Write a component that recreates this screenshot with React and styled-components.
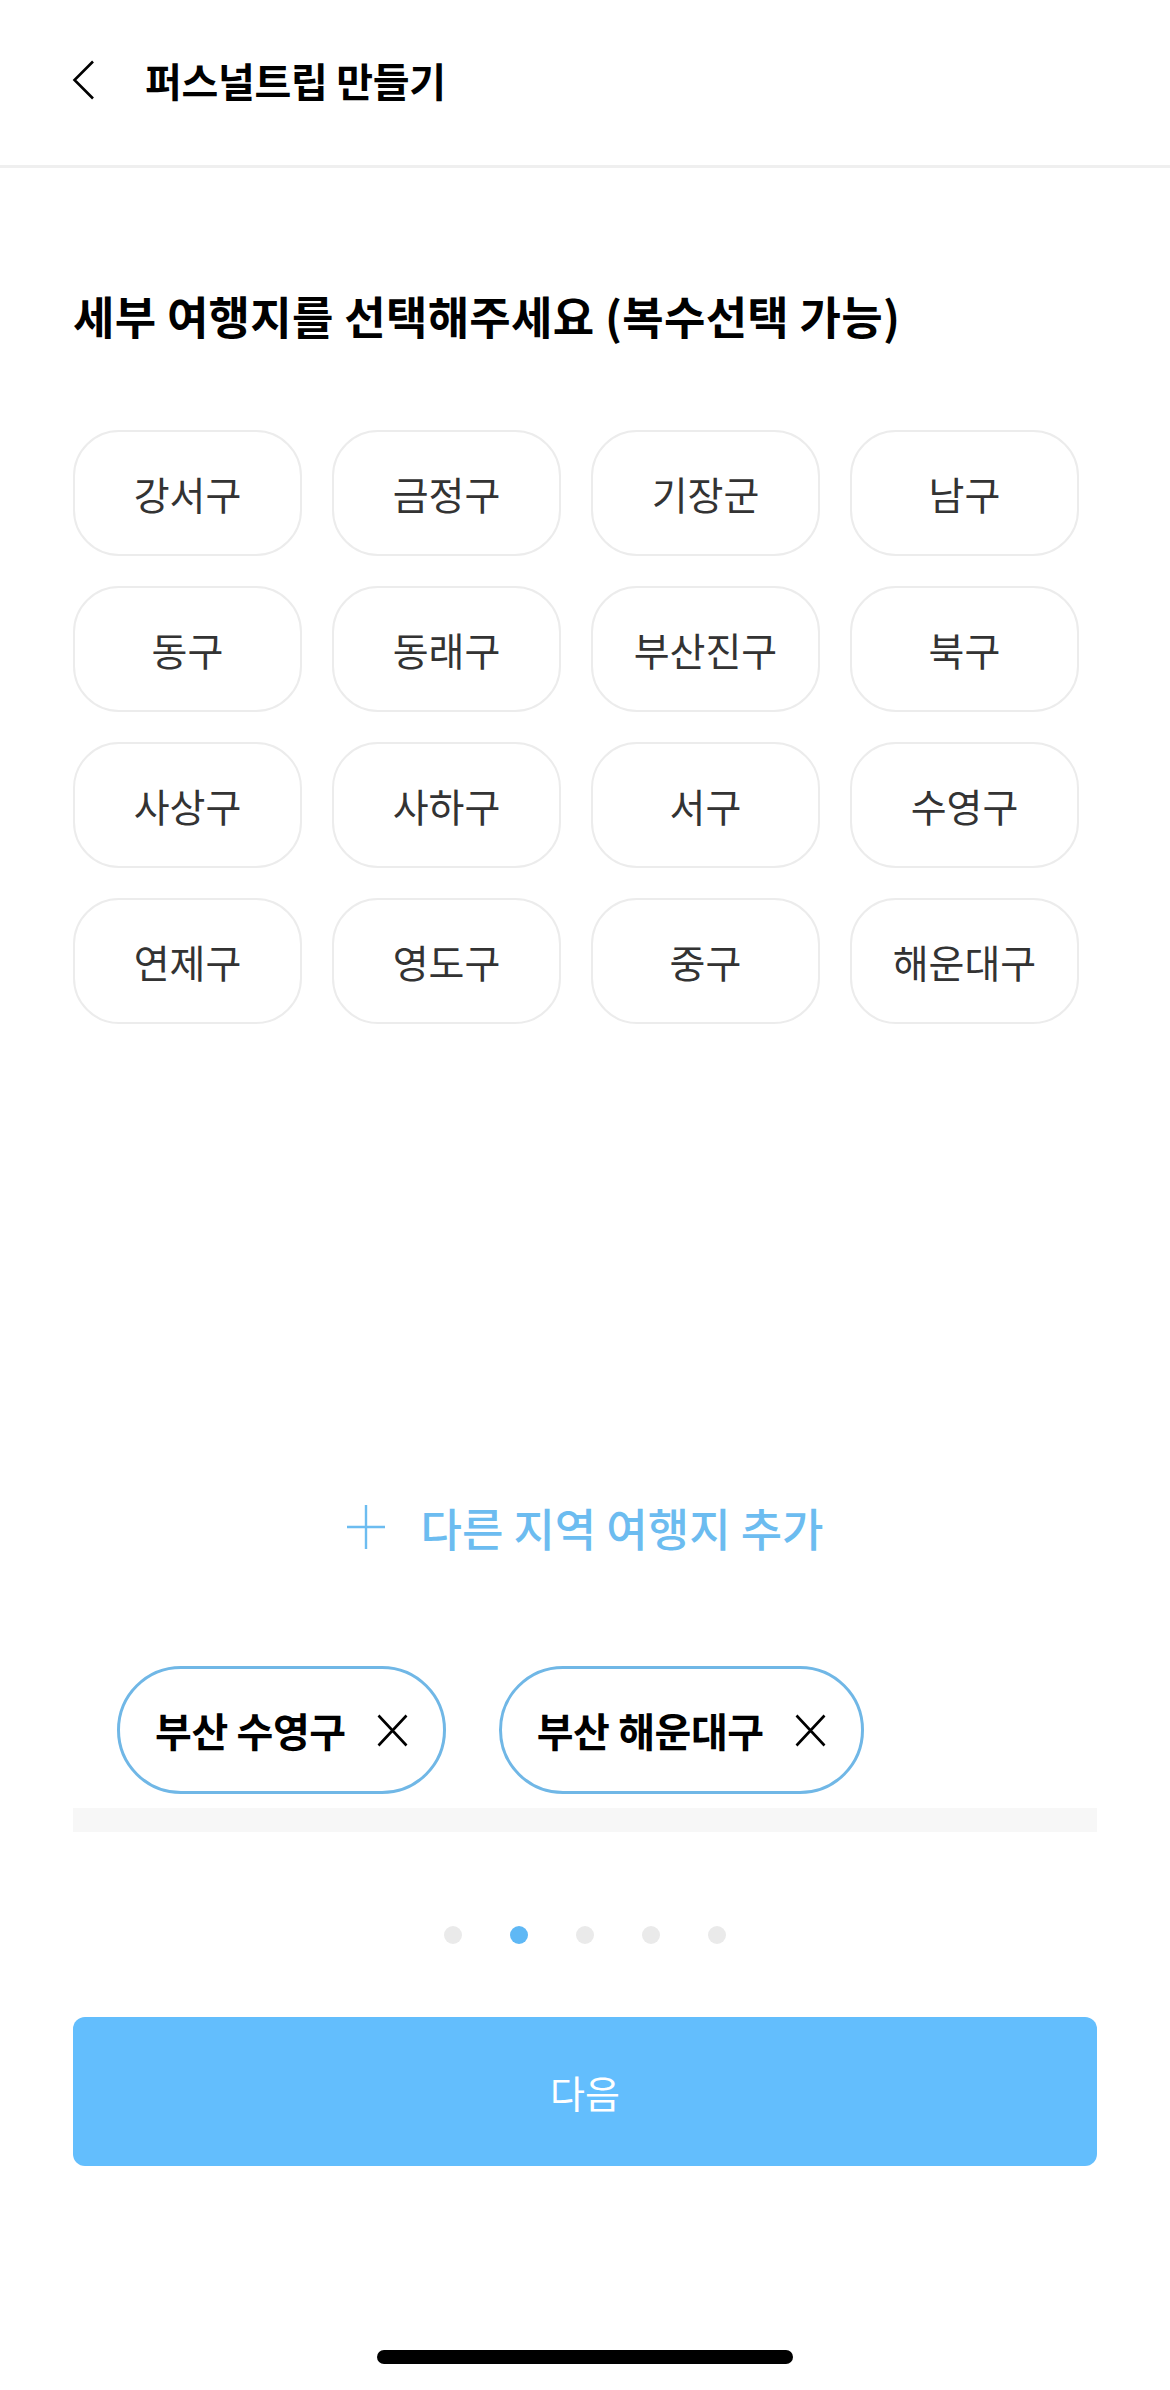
import React from "react";
import styled, { createGlobalStyle } from "styled-components";

const districts = [
  "강서구", "금정구", "기장군", "남구",
  "동구", "동래구", "부산진구", "북구",
  "사상구", "사하구", "서구", "수영구",
  "연제구", "영도구", "중구", "해운대구",
];

const picked = ["부산 수영구", "부산 해운대구"];

const GlobalStyle = createGlobalStyle`
  html, body {
    margin: 0;
    padding: 0;
    background: #ffffff;
  }
  body {
    font-family: "Noto Sans CJK KR", "Noto Sans", sans-serif;
    color: #000;
  }
  * {
    box-sizing: border-box;
  }
`;

const App = () => {
  return (
    <>
      <GlobalStyle />
      <Page>
        <Header>
          <BackBtn aria-label="back">
            <svg width="24" height="40" viewBox="0 0 24 40" fill="none">
              <path d="M21 1.5L2.5 20L21 38.5" stroke="#000" strokeWidth="2.6" />
            </svg>
          </BackBtn>
          <HeaderTitle>퍼스널트립 만들기</HeaderTitle>
        </Header>

        <Content>
          <Heading>세부 여행지를 선택해주세요 (복수선택 가능)</Heading>

          <DistrictGrid>
            {districts.map((d) => (
              <DistrictChip key={d}>{d}</DistrictChip>
            ))}
          </DistrictGrid>

          <AddRow>
            <svg width="38" height="44" viewBox="0 0 38 44" fill="none">
              <path d="M19 0V44M0 22H38" stroke="#6cbcf0" strokeWidth="2.4" />
            </svg>
            <AddText>다른 지역 여행지 추가</AddText>
          </AddRow>

          <PickedRow>
            {picked.map((p) => (
              <PickedChip key={p}>
                <span>{p}</span>
                <svg width="31" height="33" viewBox="0 0 31 33" fill="none">
                  <path d="M1.5 1.5L29.5 31.5M29.5 1.5L1.5 31.5" stroke="#000" strokeWidth="2.6" />
                </svg>
              </PickedChip>
            ))}
          </PickedRow>
          <ScrollTrack />

          <Dots>
            {[0, 1, 2, 3, 4].map((i) => (
              <Dot key={i} active={i === 1} />
            ))}
          </Dots>

          <NextBtn>다음</NextBtn>
        </Content>

        <HomeBar />
      </Page>
    </>
  );
};

export default App;

const Page = styled.div`
  width: 1170px;
  height: 2390px;
  display: flex;
  flex-direction: column;
  background: #fff;
`;

const Header = styled.div`
  height: 168px;
  display: flex;
  align-items: center;
  padding: 0 0 6px 72px;
  border-bottom: 3px solid #efefef;
`;

const BackBtn = styled.button`
  border: none;
  background: none;
  padding: 0;
  display: flex;
  width: 24px;
  height: 40px;
  cursor: pointer;
`;

const HeaderTitle = styled.div`
  margin-left: 49px;
  font-size: 40px;
  font-weight: 700;
  letter-spacing: -0.3px;
  line-height: 1;
`;

const Content = styled.div`
  display: flex;
  flex-direction: column;
  padding: 0 73px;
`;

const Heading = styled.h1`
  margin: 122px 0 0;
  font-size: 45px;
  font-weight: 700;
  line-height: 52px;
  letter-spacing: 0.3px;
`;

const DistrictGrid = styled.div`
  margin-top: 88px;
  display: grid;
  grid-template-columns: repeat(4, 229px);
  grid-auto-rows: 126px;
  gap: 30px;
`;

const DistrictChip = styled.button`
  border: 2px solid #ececec;
  border-radius: 46px;
  background: #fff;
  font-family: inherit;
  font-size: 39px;
  font-weight: 400;
  color: #333;
  display: flex;
  align-items: center;
  justify-content: center;
  padding: 0;
  cursor: pointer;
`;

const AddRow = styled.div`
  margin-top: 473px;
  height: 60px;
  display: flex;
  align-items: center;
  justify-content: center;
  gap: 36px;
  color: #6cbcf0;
`;

const AddText = styled.span`
  font-size: 45px;
  font-weight: 500;
  letter-spacing: 0;
`;

const PickedRow = styled.div`
  margin-top: 109px;
  padding-left: 44px;
  display: flex;
  gap: 53px;
`;

const PickedChip = styled.div`
  height: 128px;
  border: 3px solid #70b7e6;
  border-radius: 64px;
  padding: 0 35px 0 35px;
  display: flex;
  align-items: center;
  gap: 31px;
  font-size: 40px;
  font-weight: 700;
  color: #000;
  span {
    letter-spacing: -0.4px;
  }
`;

const ScrollTrack = styled.div`
  margin-top: 14px;
  height: 24px;
  background: #f7f7f7;
`;

const Dots = styled.div`
  margin-top: 94px;
  display: flex;
  justify-content: center;
  gap: 48px;
`;

const Dot = styled.span`
  width: 18px;
  height: 18px;
  border-radius: 50%;
  background: ${(p) => (p.active ? "#5fb8f5" : "#eaeaea")};
`;

const NextBtn = styled.button`
  margin-top: 73px;
  height: 149px;
  border: none;
  border-radius: 12px;
  background: #63befd;
  color: #fff;
  font-family: inherit;
  font-size: 38px;
  font-weight: 400;
  cursor: pointer;
`;

const HomeBar = styled.div`
  margin: auto auto 26px;
  width: 416px;
  height: 14px;
  border-radius: 7px;
  background: #000;
`;
